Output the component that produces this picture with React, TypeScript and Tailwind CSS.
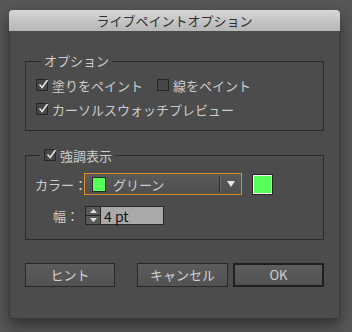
import React from "react";

const font = { fontFamily: '"Noto Sans CJK JP", "Noto Sans", sans-serif' };

function Check({ checked }: { checked?: boolean }) {
  return (
    <span className="relative w-[12px] h-[12px] border border-[#262626] bg-[#474747] shrink-0 flex items-center justify-center">
      {checked && (
        <svg width="11" height="11" viewBox="0 0 11 11" className="absolute -top-[1px] left-[1px]">
          <path d="M1.5 5.5 L4.2 8.5 L9.5 1" fill="none" stroke="#e2e2e2" strokeWidth="1.6" />
        </svg>
      )}
    </span>
  );
}

function Button({ label, primary }: { label: string; primary?: boolean }) {
  return (
    <div
      className={`h-[24px] w-[91px] flex items-center justify-center text-[13px] text-[#d2d2d2] bg-gradient-to-b from-[#5c5c5c] to-[#525252] ${
        primary ? "border-2 border-[#1f1f1f]" : "border border-[#282828]"
      }`}
    >
      {label}
    </div>
  );
}

export default function App() {
  return (
    <div className="w-[352px] h-[332px] bg-[#575757] pl-[9px] pt-[10px] overflow-hidden" style={font}>
      <div className="w-[331px] h-[309px] flex flex-col shadow-[0_6px_14px_rgba(0,0,0,0.45)]">
        {/* Title bar */}
        <div className="h-[21px] rounded-t-[4px] bg-gradient-to-b from-[#d6d6d6] to-[#b6b6b6] flex items-center justify-center text-[13px] text-[#2e2e2e] leading-none">
          ライブペイントオプション
        </div>

        {/* Body */}
        <div className="flex-1 bg-[#4c4c4c] border-x border-b border-[#3a3a3a] px-[15px] text-[#cdcdcd] text-[13px]">
          <fieldset className="mt-[22px] border border-[#2c2c2c] pl-[10px] pt-[8px] pb-[13px]">
            <legend className="ml-[5px] px-[3px] h-[16px] leading-[16px] text-[13px]">オプション</legend>
            <div className="flex items-center h-[16px]">
              <Check checked />
              <span className="ml-[4px] leading-none">塗りをペイント</span>
              <span className="ml-[14px]">
                <Check />
              </span>
              <span className="ml-[4px] leading-none">線をペイント</span>
            </div>
            <div className="flex items-center h-[16px] mt-[8px]">
              <Check checked />
              <span className="ml-[4px] leading-none">カーソルスウォッチプレビュー</span>
            </div>
          </fieldset>

          <fieldset className="mt-[16px] border border-[#2c2c2c] pl-[9px] pt-[10px] pb-[14px]">
            <legend className="ml-[5px] px-[3px] h-[16px] flex items-center">
              <span className="ml-[1px]">
                <Check checked />
              </span>
              <span className="ml-[4px] leading-none">強調表示</span>
            </legend>

            <div className="flex items-center h-[22px]">
              <span className="w-[49px] leading-none whitespace-nowrap">カラー：</span>
              <div className="w-[158px] h-[22px] border border-[#e0892c] flex items-center bg-gradient-to-b from-[#5a5a5a] to-[#4f4f4f]">
                <span className="ml-[7px] w-[14px] h-[15px] bg-[#55ff55] border border-[#2a2a2a]" />
                <span className="ml-[7px] leading-none">グリーン</span>
                <span className="ml-auto h-[15px] w-[2px] border-l border-[#2e2e2e] bg-[#6a6a6a]" />
                <svg width="8" height="6" viewBox="0 0 8 6" className="ml-[6px] mr-[6px]">
                  <path d="M0 0 H8 L4 6 Z" fill="#e6e6e6" />
                </svg>
              </div>
              <span className="ml-[10px] w-[21px] h-[21px] border border-[#262626] flex">
                <span className="flex-1 border border-[#f2f2f2] bg-[#55ff55]" />
              </span>
            </div>

            <div className="flex items-center h-[19px] mt-[11px]">
              <span className="w-[50px] text-right pr-[6px] leading-none">幅：</span>
              <div className="w-[16px] h-[19px] flex flex-col border border-[#262626] bg-[#595959]">
                <span className="flex-1 flex items-center justify-center border-b border-[#262626]">
                  <svg width="7" height="4" viewBox="0 0 7 4">
                    <path d="M0 4 L3.5 0 L7 4 Z" fill="#e0e0e0" />
                  </svg>
                </span>
                <span className="flex-1 flex items-center justify-center">
                  <svg width="7" height="4" viewBox="0 0 7 4">
                    <path d="M0 0 H7 L3.5 4 Z" fill="#e0e0e0" />
                  </svg>
                </span>
              </div>
              <div className="w-[63px] h-[19px] bg-[#a9a9a9] border border-[#2a2a2a] border-l-0 flex items-center pl-[3px] text-[#141414] text-[14px] leading-none">
                4 pt
              </div>
            </div>
          </fieldset>

          <div className="flex mt-[23px]">
            <Button label="ヒント" />
            <span className="ml-[22px]">
              <Button label="キャンセル" />
            </span>
            <span className="ml-[5px]">
              <Button label="OK" primary />
            </span>
          </div>
        </div>
      </div>
    </div>
  );
}
